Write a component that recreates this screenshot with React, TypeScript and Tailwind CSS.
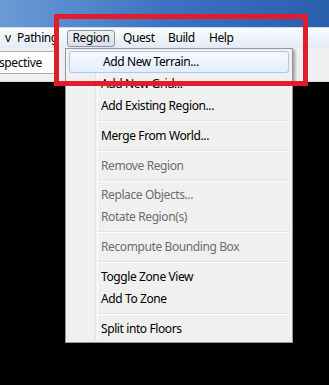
import React from 'react';

type Entry = { label: string; disabled?: boolean; active?: boolean } | 'sep';

const entries: Entry[] = [
  { label: 'Add New Terrain...', active: true },
  { label: 'Add New Grid...' },
  { label: 'Add Existing Region...' },
  'sep',
  { label: 'Merge From World...' },
  'sep',
  { label: 'Remove Region', disabled: true },
  'sep',
  { label: 'Replace Objects...', disabled: true },
  { label: 'Rotate Region(s)', disabled: true },
  'sep',
  { label: 'Recompute Bounding Box', disabled: true },
  'sep',
  { label: 'Toggle Zone View' },
  { label: 'Add To Zone' },
  'sep',
  { label: 'Split into Floors' },
];

export default function App() {
  return (
    <div
      className="relative w-[329px] h-[385px] overflow-hidden bg-black text-[12px] tracking-[-0.4px] text-black"
      style={{ fontFamily: '"Noto Sans", "Open Sans", sans-serif' }}
    >
      {/* title bar */}
      <div className="h-[27px] bg-gradient-to-r from-[#6c9bd6] via-[#3d72c0] to-[#2a5fae]" />
      <div className="h-[1px] bg-[#c9d9ee]" />

      {/* menu bar */}
      <div className="h-[20px] flex items-center bg-gradient-to-b from-[#fbfcfe] to-[#e4ebf5] leading-none">
        <span className="pl-[5px] w-[17px]">v</span>
        <span className="w-[47px]">Pathing</span>
        <span className="ml-[3px] h-[17px] w-[48px] justify-center flex items-center rounded-[3px] border border-[#8a94a2] bg-gradient-to-b from-[#eef1f5] to-[#d9e0e9]">
          Region
        </span>
        <span className="ml-[8px] w-[45px]">Quest</span>
        <span className="w-[41px]">Build</span>
        <span>Help</span>
      </div>

      {/* toolbar */}
      <div className="h-[34px] bg-[#f0f0f0] flex items-start pt-[3px] border-b border-[#d6d6d6]">
        <div className="w-[56px] h-[23px] bg-white border-r border-y border-[#abadb3] flex items-center">
          <span className="-ml-[1px]">spective</span>
        </div>
      </div>

      {/* dropdown menu */}
      <div className="absolute left-[65px] top-[48px] w-[228px] h-[295px] bg-[#f0f0f0] border border-[#979797] shadow-[2px_2px_3px_rgba(0,0,0,0.35)] p-[2px] flex">
        <div className="absolute left-[29px] top-[2px] bottom-[2px] w-[2px] border-l border-[#e2e3e3] shadow-[1px_0_0_#ffffff]" />
        <div className="flex flex-col w-full relative">
          {entries.map((e, i) =>
            e === 'sep' ? (
              <div key={i} className="h-[8px] flex items-center pl-[30px]">
                <div className="w-full h-[2px] border-t border-[#e2e3e3] bg-white" />
              </div>
            ) : (
              <div
                key={i}
                className={`h-[22px] flex items-center pl-[33px] rounded-[3px] ${
                  e.active
                    ? 'border border-[#a8c8ee] bg-gradient-to-b from-[#f5f9fe] to-[#e2edfb] mx-[1px] pl-[31px]'
                    : ''
                } ${e.disabled ? 'text-[#6d6d6d]' : 'text-black'}`}
              >
                {e.label}
              </div>
            ),
          )}
        </div>
      </div>

      {/* red annotation box */}
      <div className="absolute left-[54px] top-[14px] w-[254px] h-[72px] border-[5px] border-[#e01e2b]" />
    </div>
  );
}
